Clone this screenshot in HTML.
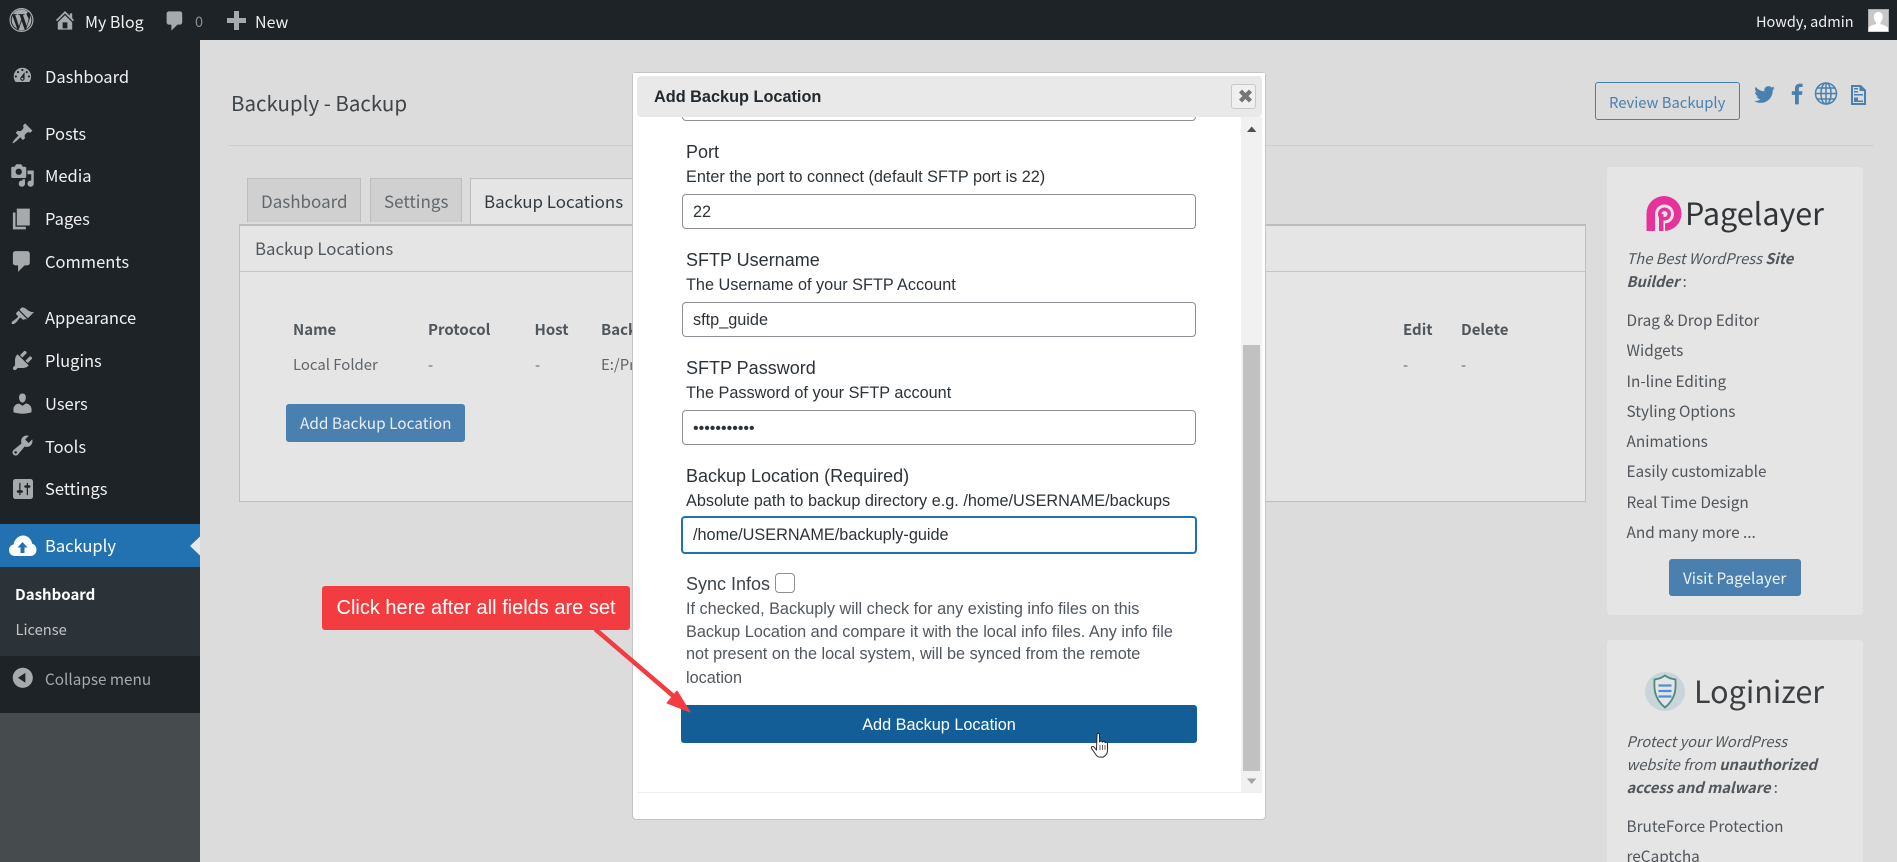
<!DOCTYPE html>
<html lang="en"><head><meta charset="utf-8"><title>Backuply - Backup</title>
<style>
html,body{margin:0;padding:0;width:1897px;height:862px;overflow:hidden;background:#dcdcdc}
body{position:relative;font-family:"Noto Sans CJK SC","Liberation Sans",sans-serif;color:#3a4045}
.b{position:absolute;box-sizing:border-box}
.t{position:absolute;white-space:nowrap;line-height:20px;height:20px}
.l{font-family:"Liberation Sans",sans-serif}
.m{color:#f0f0f1;font-size:16.5px;left:45px}
.lab{font-family:"Liberation Sans",sans-serif;font-size:18px;color:#2c3338;left:686px}
.hint{font-family:"Liberation Sans",sans-serif;font-size:16.25px;color:#2c3338;left:686px}
.grey{font-family:"Liberation Sans",sans-serif;font-size:16.25px;color:#50575e;left:686px}
.inp{position:absolute;box-sizing:border-box;left:682px;width:514px;height:35px;background:#fff;border:1px solid #8c8f94;border-radius:4px}
.val{font-family:"Liberation Sans",sans-serif;font-size:16.25px;color:#2c3338;left:693px}
.card{color:#50565b;font-size:14.7px;left:1626.5px}
.li{font-size:15.35px}
.th{font-weight:700;font-size:15px;color:#50565b}
.td{font-size:14.9px;color:#5f656a}
</style></head><body>
<div class="b" style="left:0;top:0;width:1897px;height:40px;background:#1d2327"></div>
<div class="b" style="left:0;top:40px;width:200px;height:673px;background:#1d2327"></div>
<div class="b" style="left:0;top:713px;width:200px;height:149px;background:#464b4e"></div>
<div class="b" style="left:0;top:524px;width:200px;height:43px;background:#2271b1"></div>
<div class="b" style="left:0;top:567px;width:200px;height:89px;background:#2c3338"></div>

<span class="t" style="left:85px;top:10.500px;color:#f0f0f1;font-size:16px">My Blog</span>
<span class="t" style="left:195px;top:12px;color:#8a8e92;font-size:14.5px">0</span>
<span class="t" style="left:255px;top:10.500px;color:#f0f0f1;font-size:16px">New</span>
<span class="t" style="left:1756px;top:11.500px;color:#f0f0f1;font-size:14.5px">Howdy, admin</span>
<div class="b" style="left:1868px;top:9px;width:21px;height:23px;background:#c8c8c8;border:1px solid #aaa"></div>

<span class="t m" style="top:66px">Dashboard</span>
<span class="t m" style="top:123px">Posts</span>
<span class="t m" style="top:165px">Media</span>
<span class="t m" style="top:208px">Pages</span>
<span class="t m" style="top:251px">Comments</span>
<span class="t m" style="top:307px">Appearance</span>
<span class="t m" style="top:350px">Plugins</span>
<span class="t m" style="top:393px">Users</span>
<span class="t m" style="top:436px">Tools</span>
<span class="t m" style="top:478px">Settings</span>
<span class="t m" style="top:535px;color:#fff">Backuply</span>
<span class="t" style="left:15px;top:585px;color:#fff;font-weight:700;font-size:15px">Dashboard</span>
<span class="t" style="left:15.500px;top:620px;color:#c3c4c7;font-size:14.7px">License</span>
<span class="t" style="left:45px;top:669px;color:#a7aaad;font-size:15.300px">Collapse menu</span>

<span class="t" style="left:231px;top:91.500px;font-size:20.500px;color:#3f4549">Backuply - Backup</span>
<div class="b" style="left:228px;top:145px;width:1646px;height:1px;background:#cdcdcd"></div>

<div class="b" style="left:247px;top:178px;width:114px;height:44px;background:#d0d0d0;border:1px solid #bdbdbd;border-bottom:0"></div>
<div class="b" style="left:370px;top:178px;width:92px;height:44px;background:#d0d0d0;border:1px solid #bdbdbd;border-bottom:0"></div>
<div class="b" style="left:470px;top:178px;width:170px;height:46px;background:#e5e5e5;border:1px solid #bdbdbd;border-bottom:0"></div>
<span class="t" style="left:261px;top:190.500px;font-size:17px;color:#62676b">Dashboard</span>
<span class="t" style="left:384px;top:190.500px;font-size:17px;color:#62676b">Settings</span>
<span class="t" style="left:484px;top:190.500px;font-size:16.900px;color:#333a3f">Backup Locations</span>
<div class="b" style="left:239px;top:224px;width:1347px;height:278px;background:#e5e5e5;border:1px solid #bfbfbf;border-top:2px solid #bcbcbc"></div>
<div class="b" style="left:240px;top:271px;width:1345px;height:1px;background:#c4c4c4"></div>
<span class="t" style="left:255px;top:237.500px;font-size:16.800px;color:#50565b">Backup Locations</span>

<span class="t th" style="left:293px;top:320px">Name</span>
<span class="t th" style="left:428px;top:320px">Protocol</span>
<span class="t th" style="left:534.500px;top:320px">Host</span>
<span class="t th" style="left:601px;top:320px">Backup</span>
<span class="t th" style="left:1403px;top:320px">Edit</span>
<span class="t th" style="left:1461px;top:320px">Delete</span>
<span class="t td" style="left:293px;top:355px">Local Folder</span>
<span class="t td" style="left:428px;top:355px">-</span>
<span class="t td" style="left:535px;top:355px">-</span>
<span class="t td" style="left:601px;top:355px">E:/Program</span>
<span class="t td" style="left:1403px;top:355px">-</span>
<span class="t td" style="left:1461px;top:355px">-</span>
<div class="b" style="left:286px;top:404px;width:179px;height:38px;background:#4a80b0;border-radius:3px"></div>
<span class="t" style="left:300px;top:413px;font-size:15.400px;color:#e8edf1">Add Backup Location</span>

<div class="b" style="left:1595px;top:82px;width:145px;height:38px;border:1px solid #4a80b0;border-radius:3px"></div>
<span class="t" style="left:1609px;top:93px;font-size:14.800px;color:#4a80b0">Review Backuply</span>

<div class="b" style="left:1607px;top:167px;width:256px;height:448px;background:#e5e5e5;border-radius:4px"></div>
<span class="t" style="left:1685px;top:202px;font-size:30.500px;color:#323537">Pagelayer</span>
<span class="t card" style="top:249px"><i>The Best WordPress <b>Site</b></i></span>
<span class="t card" style="top:272px"><i><b>Builder</b></i> :</span>
<span class="t card li" style="top:310px">Drag &amp; Drop Editor</span>
<span class="t card li" style="top:340px">Widgets</span>
<span class="t card li" style="top:371px">In-line Editing</span>
<span class="t card li" style="top:401px">Styling Options</span>
<span class="t card li" style="top:431px">Animations</span>
<span class="t card li" style="top:461px">Easily customizable</span>
<span class="t card li" style="top:492px">Real Time Design</span>
<span class="t card li" style="top:522px">And many more ...</span>
<div class="b" style="left:1669px;top:559px;width:132px;height:37px;background:#4a80b0;border-radius:3px"></div>
<span class="t" style="left:1683px;top:567.500px;font-size:15.300px;color:#eef2f5">Visit Pagelayer</span>

<div class="b" style="left:1607px;top:640px;width:256px;height:222px;background:#e5e5e5;border-radius:4px 4px 0 0"></div>
<span class="t" style="left:1694px;top:680px;font-size:30.500px;color:#3c3f41">Loginizer</span>
<span class="t card" style="top:732px"><i>Protect your WordPress</i></span>
<span class="t card" style="top:755px"><i>website from <b>unauthorized</b></i></span>
<span class="t card" style="top:778px"><i><b>access and malware</b></i> :</span>
<span class="t card li" style="top:816px">BruteForce Protection</span>
<span class="t card li" style="top:846px">reCaptcha</span>

<!-- callout -->
<div class="b" style="left:322px;top:586px;width:308px;height:44px;background:#f23c3f;border-radius:3px"></div>
<span class="t l" style="left:336.500px;top:598px;font-size:20px;color:#fff">Click here after all fields are set</span>

<!-- modal -->
<div class="b" style="left:632px;top:72px;width:634px;height:748px;background:#fff;border:1px solid #c4c4c4;border-radius:4px"></div>
<div class="inp" style="top:86px"></div>
<div class="b" style="left:633px;top:73px;width:632px;height:44px;background:#fff"></div>
<div class="b" style="left:637px;top:76px;width:625px;height:41px;background:#e9e9e9;border-radius:4px"></div>
<span class="t l" style="left:654px;top:86.500px;font-size:16.300px;font-weight:700;color:#23282d">Add Backup Location</span>
<div class="b" style="left:1231px;top:84px;width:25px;height:25px;background:#f0f0f0;border:1px solid #c8c8c8;border-radius:3px"></div>
<div class="b" style="left:1241px;top:117px;width:21px;height:675px;background:#f1f1f1"></div>
<div class="b" style="left:1243px;top:345px;width:17px;height:426px;background:#c1c1c1"></div>
<div class="b" style="left:637px;top:792px;width:625px;height:1px;background:#eeeeee"></div>

<span class="t lab" style="top:142px">Port</span>
<span class="t hint" style="top:166.500px">Enter the port to connect (default SFTP port is 22)</span>
<div class="inp" style="top:194px"></div>
<span class="t val" style="top:202px">22</span>

<span class="t lab" style="top:250px">SFTP Username</span>
<span class="t hint" style="top:274.500px">The Username of your SFTP Account</span>
<div class="inp" style="top:302px"></div>
<span class="t val" style="top:309.500px">sftp_guide</span>

<span class="t lab" style="top:358px">SFTP Password</span>
<span class="t hint" style="top:382.500px">The Password of your SFTP account</span>
<div class="inp" style="top:410px"></div>
<span class="t val" style="top:419px;font-size:16px">•••••••••••</span>

<span class="t lab" style="top:466px">Backup Location (Required)</span>
<span class="t hint" style="top:490.500px">Absolute path to backup directory e.g. /home/USERNAME/backups</span>
<div class="inp" style="top:516px;left:681px;width:516px;height:38px;border:2px solid #2271b1"></div>
<span class="t val" style="top:525px">/home/USERNAME/backuply-guide</span>

<span class="t lab" style="top:574px;color:#3c434a">Sync Infos</span>
<div class="b" style="left:775px;top:573px;width:20px;height:20px;background:#fff;border:1px solid #8c8f94;border-radius:4px"></div>
<span class="t grey" style="top:599px">If checked, Backuply will check for any existing info files on this</span>
<span class="t grey" style="top:622px">Backup Location and compare it with the local info files. Any info file</span>
<span class="t grey" style="top:644px">not present on the local system, will be synced from the remote</span>
<span class="t grey" style="top:667.500px">location</span>
<div class="b" style="left:681px;top:705px;width:516px;height:38px;background:#135e96;border-radius:3px"></div>
<span class="t l" style="left:681px;width:516px;text-align:center;top:715px;font-size:16.250px;color:#fff">Add Backup Location</span>

<svg width="1897" height="862" viewBox="0 0 1897 862" style="position:absolute;left:0;top:0;pointer-events:none">
<!-- admin bar -->
<g fill="#a7aaad">
<g transform="translate(9.500,8) scale(1.2)"><path fill-rule="evenodd" d="M20 10c0-5.52-4.48-10-10-10S0 4.48 0 10s4.48 10 10 10 10-4.48 10-10zM10 1.01c4.96 0 8.99 4.03 8.99 8.99s-4.03 8.99-8.99 8.99S1.01 14.96 1.01 10 5.04 1.01 10 1.01zm8.2 8.99c0-1.5-.4-2.9-1.1-4.1.04.3.06.6.06.95 0 .88-.16 1.87-.66 3.12l-2.64 7.64c2.6-1.5 4.34-4.3 4.34-7.61zM10.14 10.83l-2.59 7.52c.77.23 1.59.35 2.44.35.96 0 1.88-.17 2.74-.46-.02-.03-.04-.07-.06-.11zm5.68-1.31c0-1.07-.39-1.82-.72-2.4-.44-.72-.86-1.33-.86-2.05 0-.81.61-1.56 1.47-1.56h.11C14.26 2.08 12.2 1.23 9.99 1.23c-2.98 0-5.6 1.53-7.12 3.84.2.01.39.01.55.01.9 0 2.29-.11 2.29-.11.46-.03.52.65.05.71 0 0-.47.05-.98.08l3.12 9.3 1.88-5.63L8.44 5.76c-.46-.03-.9-.08-.9-.08-.47-.03-.41-.74.05-.71 0 0 1.41.11 2.25.11.9 0 2.29-.11 2.29-.11.46-.03.52.65.05.71 0 0-.47.05-.98.08l3.1 9.22.86-2.86c.37-1.19.65-2.04.65-2.78zM1.8 10c0 3.25 1.89 6.05 4.63 7.38L2.5 6.65C2.06 7.66 1.8 8.8 1.8 10z"/></g>
<g transform="translate(53,8) scale(1.2)"><path fill-rule="evenodd" d="M16 8.5l1.53 1.53-1.06 1.06L10 4.62l-6.47 6.47-1.06-1.06L10 2.5l4 4v-2h2v4zm-6-2.46l6 5.99V18H4v-5.97zM12 17v-5H8v5h4z"/></g>
<g transform="translate(163,9) scale(1.2)"><path d="M5 2h9c1.1 0 2 .9 2 2v7c0 1.1-.9 2-2 2h-2l-5 5v-5H5c-1.1 0-2-.9-2-2V4c0-1.1.9-2 2-2z"/></g>
<path d="M234 11h5v7h7v5h-7v7h-5v-7h-7v-5h7z"/>
</g>
<path d="M1878.500 12c3.200 0 4.600 3 4.200 5.800-.3 2-1.200 3.600-2.200 4.600v1.600c2.500.8 6.500 2 7.500 4v3.500h-19.500V28c1-2 5-3.200 7.500-4v-1.600c-1-1-1.900-2.600-2.200-4.600-.4-2.800 1-5.800 4.700-5.800z" fill="#fff"/>

<!-- sidebar icons -->
<g fill="#a7aaad">
<g transform="translate(11.500,64.500) scale(1.09)"><path fill-rule="evenodd" d="M3.76 16h12.48c1.1-1.37 1.76-3.11 1.76-5 0-4.42-3.58-8-8-8s-8 3.58-8 8c0 1.89.66 3.63 1.76 5zM10 4c.55 0 1 .45 1 1s-.45 1-1 1-1-.45-1-1 .45-1 1-1zM6 6c.55 0 1 .45 1 1s-.45 1-1 1-1-.45-1-1 .45-1 1-1zm8 0c.55 0 1 .45 1 1s-.45 1-1 1-1-.45-1-1 .45-1 1-1zm-5.37 5.55L12 7v6c0 1.1-.9 2-2 2s-2-.9-2-2c0-.57.24-1.08.63-1.45zM4 10c.55 0 1 .45 1 1s-.45 1-1 1-1-.45-1-1 .45-1 1-1zm12 0c.55 0 1 .45 1 1s-.45 1-1 1-1-.45-1-1 .45-1 1-1zm-5 3c0-.55-.45-1-1-1s-1 .45-1 1 .45 1 1 1 1-.45 1-1z"/></g>
<g transform="translate(11,122) scale(1.15)"><path d="M10.44 3.02l1.82-1.82 6.36 6.35-1.83 1.82c-1.05-.68-2.48-.57-3.41.36l-.75.75c-.92.93-1.04 2.35-.35 3.41l-1.83 1.82-2.41-2.41-2.8 2.79c-.42.42-3.38 2.71-3.8 2.29s1.86-3.39 2.28-3.81l2.79-2.79L4.1 9.36l1.83-1.82c1.05.69 2.48.57 3.4-.36l.75-.75c.93-.92 1.05-2.35.36-3.41z"/></g>
<g transform="translate(10,163) scale(1.25)"><path fill-rule="evenodd" d="M13 11V4c0-.55-.45-1-1-1h-1.67L9 1H5L3.67 3H2c-.55 0-1 .45-1 1v7c0 .55.45 1 1 1h10c.55 0 1-.45 1-1zM7 4.5c1.38 0 2.5 1.12 2.5 2.5S8.38 9.5 7 9.5 4.5 8.38 4.5 7 5.62 4.5 7 4.5zM14 6h5v10.5c0 1.38-1.12 2.5-2.5 2.5S14 17.88 14 16.5s1.12-2.5 2.5-2.5c.17 0 .34.02.5.05V9h-3V6zm-4 8.05V13h2v3.5c0 1.38-1.12 2.5-2.5 2.5S7 17.88 7 16.5 8.12 14 9.5 14c.17 0 .34.02.5.05z"/></g>
<g transform="translate(9,206) scale(1.3)"><path d="M6 15V2h10v13H6zm-1 1h8v2H3V5h2v11z"/></g>
<g transform="translate(9,248.500) scale(1.3)"><path d="M5 2h9c1.1 0 2 .9 2 2v7c0 1.1-.9 2-2 2h-2l-5 5v-5H5c-1.1 0-2-.9-2-2V4c0-1.1.9-2 2-2z"/></g>
<g transform="translate(10.500,305) scale(1.2)"><path d="M14.48 11.06L7.41 3.99l1.5-1.5c.5-.56 2.3-.47 3.51.32 1.21.8 1.43 1.28 2.91 2.1 1.18.64 2.45 1.26 4.45.85zm-.71.71L6.7 4.7 4.93 6.47c-.39.39-.39 1.02 0 1.41l1.06 1.06c.39.39.39 1.03 0 1.42-.6.6-1.43 1.11-2.21 1.69-.35.26-.7.53-1.01.84C1.43 13.23.4 14.91 1.2 15.7c.8.8 2.48-.23 3.82-1.57.31-.31.58-.66.84-1.01.58-.78 1.09-1.61 1.69-2.21.39-.39 1.02-.39 1.41 0l1.06 1.06c.39.39 1.02.39 1.41 0z"/></g>
<g transform="translate(10,348) scale(1.25)"><path d="M13.11 4.36L9.87 7.6 8 5.73l3.24-3.24c.35-.34 1.05-.2 1.56.32.52.51.66 1.21.31 1.55zm-8 1.77l.91-1.12 9.01 9.01-1.19.84c-.71.71-2.63 1.16-3.82 1.16H6.14L4.9 17.26c-.59.59-1.54.59-2.12 0-.59-.58-.59-1.53 0-2.12l1.24-1.24v-3.88c0-1.13.4-3.19 1.09-3.89zm7.26 3.97l3.24-3.24c.34-.35 1.04-.21 1.55.31.52.51.66 1.21.31 1.55l-3.24 3.25z"/></g>
<g transform="translate(10,391) scale(1.25)"><path d="M10 9.25c-2.27 0-2.73-3.44-2.73-3.44C7 4.02 7.82 2 9.97 2c2.16 0 2.98 2.02 2.71 3.81 0 0-.41 3.44-2.68 3.44zm0 2.57L12.72 10c2.39 0 4.52 2.33 4.52 4.53v2.49s-3.65 1.13-7.24 1.13c-3.65 0-7.24-1.13-7.24-1.13v-2.49c0-2.25 1.94-4.48 4.47-4.48z"/></g>
<g transform="translate(10,433) scale(1.25)"><path fill-rule="evenodd" d="M16.68 9.77c-1.34 1.34-3.3 1.67-4.95.99l-5.41 6.52c-.99.99-2.59.99-3.58 0s-.99-2.59 0-3.57l6.52-5.42c-.68-1.65-.35-3.61.99-4.95 1.28-1.28 3.12-1.62 4.72-1.06l-2.89 2.89 2.82 2.82 2.86-2.87c.53 1.58.18 3.39-1.08 4.65zM3.81 16.21c.4.39 1.04.39 1.43 0 .4-.4.4-1.04 0-1.43-.39-.4-1.03-.4-1.43 0-.39.39-.39 1.03 0 1.43z"/></g>
<g transform="translate(10.500,476.500) scale(1.25)"><path fill-rule="evenodd" d="M18 16V4c0-1.1-.9-2-2-2H4c-1.1 0-2 .9-2 2v12c0 1.100.9 2 2 2h12c1.100 0 2-.9 2-2zM8 11h1c.55 0 1 .45 1 1s-.45 1-1 1H8v1.500c0 .28-.22.5-.5.5s-.5-.22-.5-.5V13H6c-.55 0-1-.45-1-1s.45-1 1-1h1V5.500c0-.28.22-.5.5-.5s.5.22.5.5V11zm5-2h-1c-.55 0-1-.45-1-1s.45-1 1-1h1V5.500c0-.28.22-.5.5-.5s.5.22.5.5V7h1c.55 0 1 .45 1 1s-.45 1-1 1h-1v5.500c0 .28-.22.5-.5.5s-.5-.22-.5-.5V9z"/></g>
<g transform="translate(10,665) scale(1.28)"><path fill-rule="evenodd" d="M10 2.160c4.330 0 7.840 3.510 7.840 7.840s-3.510 7.840-7.840 7.840S2.160 14.330 2.160 10 5.710 2.160 10 2.160zm2 11.720V6.120L6.180 9.970z"/></g>
</g>
<!-- backuply cloud -->
<path fill-rule="evenodd" d="M15 556c-3.500 0-6-2.500-6-6 0-3 2-5 4.500-5.500.8-5 5-9 9.500-9 4.700 0 8.500 3.500 9.200 8.300 2.500.7 4.300 3 4.300 6 0 3.500-2.500 6.200-6 6.200zM22.500 542l-5 5.500h3V553h4v-5.500h3z" fill="#fff"/>
<path d="M200 536.500l-10 9.500 10 9.500z" fill="#e8e8e8"/>

<!-- header social -->
<g fill="#4a80b0">
<g transform="translate(1753,83) scale(1.15)"><path d="M18.94 4.460c-.49.73-1.11 1.38-1.83 1.9.01.15.01.31.01.47 0 4.850-3.690 10.440-10.430 10.440-2.070 0-4-.61-5.630-1.650.29.03.58.05.88.05 1.720 0 3.300-.59 4.550-1.570-1.600-.03-2.950-1.090-3.420-2.550.22.04.45.07.69.07.33 0 .66-.05.96-.13-1.670-.34-2.940-1.820-2.940-3.600v-.04c.5.27 1.060.44 1.660.46-.98-.66-1.630-1.780-1.630-3.060 0-.67.18-1.300.5-1.840 1.810 2.220 4.510 3.680 7.560 3.830-.06-.27-.1-.55-.1-.84 0-2.020 1.650-3.660 3.670-3.660 1.060 0 2.010.44 2.680 1.160.83-.17 1.620-.47 2.330-.9-.28.85-.86 1.570-1.620 2.020.75-.08 1.450-.28 2.110-.57z"/></g>
<g transform="translate(1784,81) scale(1.3)"><path d="M8.460 18h2.930v-7.300h2.450l.37-2.840h-2.820V6.040c0-.82.23-1.380 1.410-1.380h1.510V2.110c-.26-.03-1.150-.11-2.190-.11-2.180 0-3.660 1.330-3.660 3.760v2.100H6v2.840h2.460V18z"/></g>
</g>
<g fill="none" stroke="#4a80b0" stroke-width="1.500">
<circle cx="1826" cy="93.500" r="10.500"/>
<ellipse cx="1826" cy="93.500" rx="5" ry="10.500"/>
<path d="M1826 83v21M1815.500 93.500h21M1817 88h18M1817 99h18"/>
</g>
<path fill="#4a80b0" fill-rule="evenodd" d="M1851 85h10l5 5v15h-15zM1853 87v16h11V91h-4.500v-4zM1854 88h4v1.500h-4zM1854 91h4v1.500h-4zM1854 94h9v1.500h-9zM1854 97.500h4v3h5v1.500h-9z"/>

<!-- pagelayer logo -->
<path fill="#e5339b" d="M1646.500 231v-17.500a17.500 17.500 0 1 1 17.500 17.500h-8.500v-1z"/>
<circle cx="1664.500" cy="214" r="9.500" fill="#e5e5e5"/>
<rect x="1655" y="214" width="4.500" height="17.500" fill="#e5e5e5"/>
<rect x="1646.500" y="214" width="8.500" height="17" fill="#e5339b"/>
<circle cx="1664.500" cy="214" r="6.500" fill="#e5339b"/>
<circle cx="1664.500" cy="214" r="3" fill="#e5e5e5"/>
<rect x="1659" y="214" width="4.500" height="17" fill="#e5339b"/>
<rect x="1663.500" y="222.500" width="1.500" height="8.500" fill="#e5e5e5"/>

<!-- loginizer logo -->
<ellipse cx="1665" cy="691.500" rx="20" ry="19.500" fill="#c9d5da"/>
<path d="M1665 675.500c2.800 2.200 7 3.500 10.500 4 .5 9 .5 19-10.500 28-11-9-11-19-10.500-28 3.500-.5 7.700-1.800 10.500-4z" fill="#e5e5e5" stroke="#4c8c7c" stroke-width="1.800"/>
<path d="M1658.500 685.500h13M1658.500 691h13M1658.500 696.500h13" stroke="#4f8fd8" stroke-width="2.300"/>

<!-- close icon -->
<path d="M1239 92.500l3 -3 3.500 3.500 3.500-3.500 3 3-3.500 3.500 3.500 3.500-3 3-3.500-3.500-3.500 3.500-3-3 3.500-3.500z" fill="#757575"/>
<!-- scroll arrows -->
<path d="M1247 132l4.700-5.500 4.700 5.500z" fill="#505050"/>
<path d="M1247 778.500l4.700 5.500 4.700-5.500z" fill="#a3a3a3"/>

<!-- arrow -->
<path d="M595 629L678 700" stroke="#f23c3f" stroke-width="4.500" fill="none"/>
<path d="M690 712L667 703L677 691z" fill="#f23c3f" stroke="#f23c3f" stroke-width="1" stroke-linejoin="round"/>

<!-- cursor -->
<path d="M1097 734.500c0-1.500 2.500-1.500 2.500 0v7.500c.5-1.500 2.800-1.200 2.800.3.600-1.300 2.800-1 2.800.5.700-1 2.400-.6 2.400.8v7c0 3-2 5.500-4.500 6.500h-3.500c-2 0-3-1.500-4-3l-3.800-5.500c-1-1.700 1-3 2.300-1.500l2.500 3z" fill="#fff" stroke="#2a2a2a" stroke-width="1" stroke-linejoin="round"/>
<path d="M1100 745v5M1102.500 745v5M1105 745v5" stroke="#2a2a2a" stroke-width=".7"/>
</svg>
</body></html>
